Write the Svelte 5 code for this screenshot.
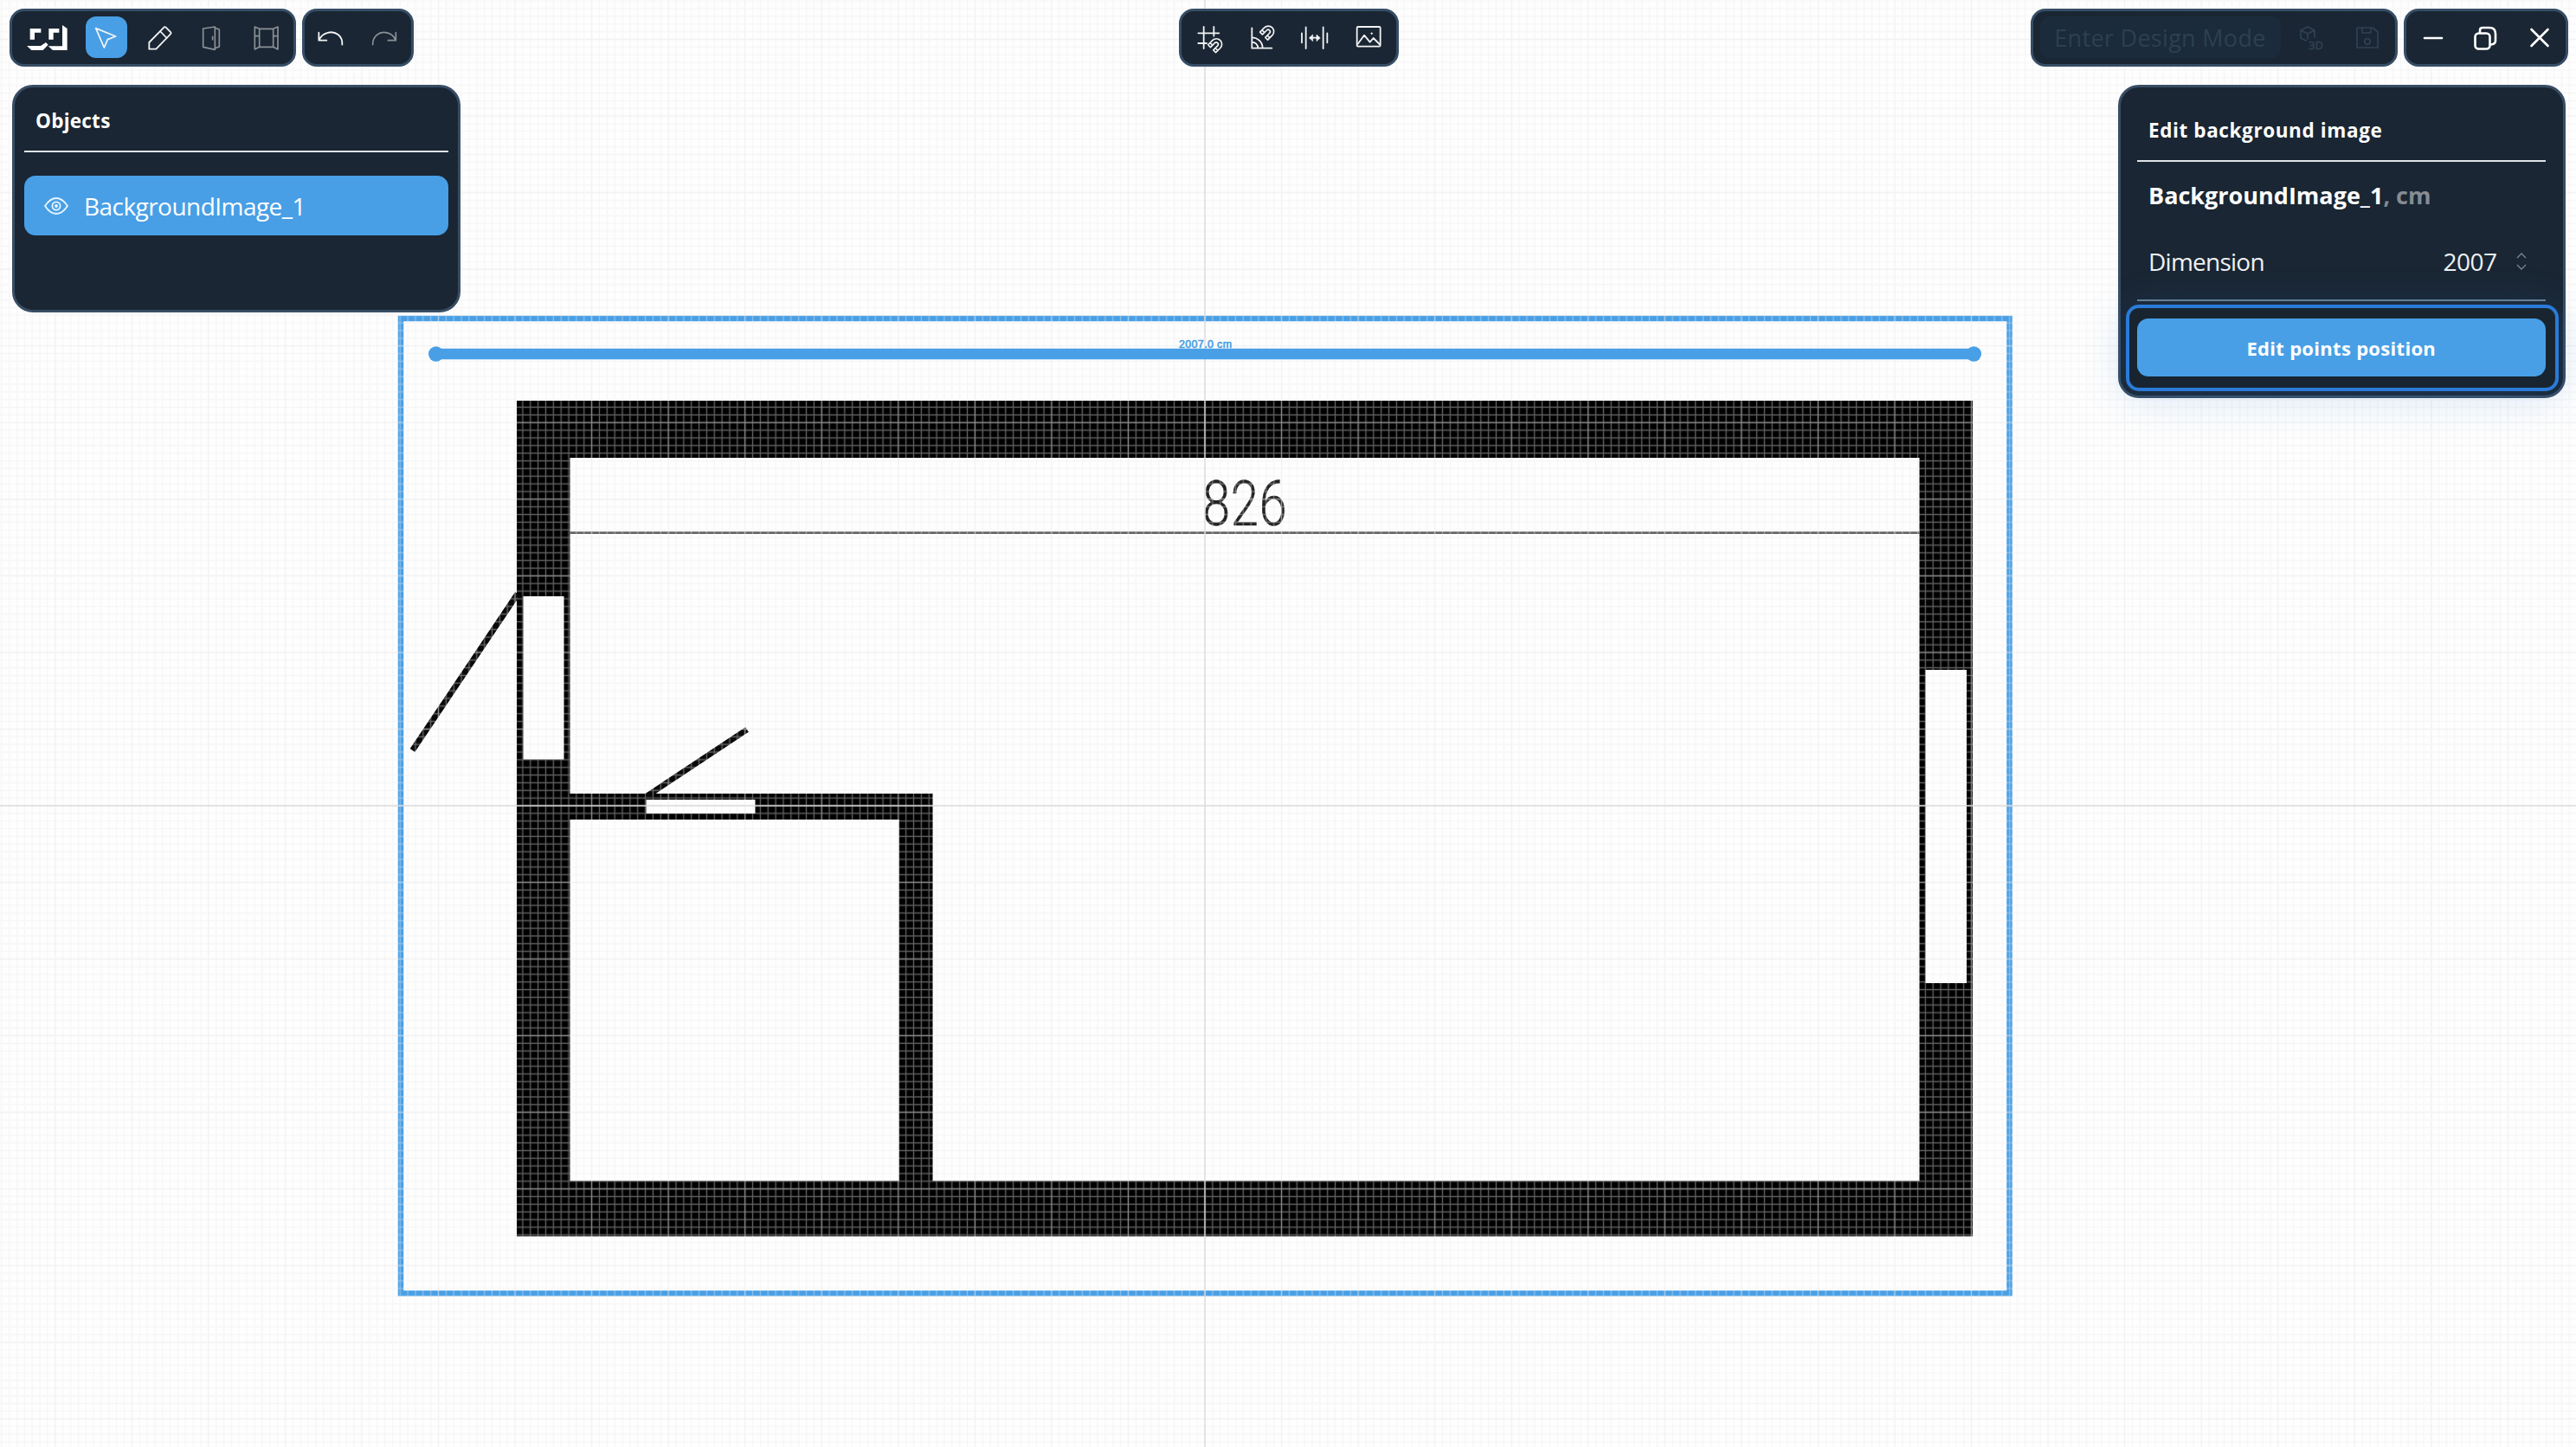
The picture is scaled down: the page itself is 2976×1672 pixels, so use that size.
<script>
  const cx = 1392;
  const cy = 931;
  const cell = 8.855;
  const major = cell * 10;
</script>

{#snippet magnet(x, y)}
  <g transform="translate({x} {y}) rotate(45)">
    <path d="M-19 18V-4A19 19 0 0 1 19 -4V18H7V-3A7 7 0 0 0 -7 -3V18ZM-19 8H-7M7 8H19" stroke-width="5" />
  </g>
{/snippet}

<main class="app">
  <svg class="canvas" viewBox="0 0 2976 1672" width="2976" height="1672">
    <defs>
      <pattern id="minor" x={cx - cell / 2} y={cy - cell / 2} width={cell} height={cell} patternUnits="userSpaceOnUse">
        <path d="M{cell / 2} 0V{cell}M0 {cell / 2}H{cell}" class="minor" />
      </pattern>
      <pattern id="major" x={cx - major / 2} y={cy - major / 2} width={major} height={major} patternUnits="userSpaceOnUse">
        <path d="M{major / 2} 0V{major}M0 {major / 2}H{major}" class="major" />
      </pattern>
    </defs>

    <rect class="selection" x="463" y="368" width="1858.5" height="1126.5" />
    <path
      class="walls"
      fill-rule="evenodd"
      d="M597 463H2279V1428.5H597ZM658.5 529V917H1077.5V1364.5H2217.5V529ZM658.5 947V1364.5H1038.7V947ZM604.5 689H651.5V877.5H604.5ZM746.5 924H872.5V940H746.5ZM2224.5 774H2272V1136H2224.5Z"
    />
    <path class="door" d="M476.5 867L598 686M747 920L863 843" />
    <path class="measure" d="M658 615.7H2218" />
    <text class="figure" x="0" y="0" transform="translate(1389 606.5) scale(.8 1)" textLength="122">826</text>

    <rect width="2976" height="1672" fill="url(#minor)" />
    <rect width="2976" height="1672" fill="url(#major)" />
    <path class="axis" d="M{cx} 0V1672M0 {cy}H2976" />

    <path class="ruler" d="M503.5 409H2280" />
    <circle class="handle" cx="503.7" cy="409" r="8.7" />
    <circle class="handle" cx="2280.3" cy="409" r="8.7" />
    <text class="length" x="1362" y="402" textLength="61">2007.0 cm</text>
  </svg>

  <div class="overlay">
    <header>
      <div class="side">
        <nav class="bar tools">
          <svg class="icon logo" viewBox="92 57 144 144">
            <path d="M103 99H141V113H119V137H103ZM168 99H204V113H184V137H168ZM92 159H140L158 147L166 155L148 174H108ZM215 87L232 99V174H182L166 160H215Z" />
          </svg>
          <button class="tool active" aria-label="Select">
            <svg class="icon" viewBox="298 57 144 144"><path d="M333 98L402 126L374 137L362 165Z" /></svg>
          </button>
          <svg class="icon" viewBox="482 57 144 144"><path d="M516 170V147L568 94Q571 92 574 95L591 112Q593 115 590 118L540 170ZM554 108L577 132" /></svg>
          <svg class="icon dim" viewBox="666 57 144 144"><path d="M704 99L745 93V172L704 163ZM745 97L760 102V162L745 167M737 127V137" /></svg>
          <svg class="icon dim" viewBox="850 57 144 144"><path d="M881 93L897 100V163L881 171ZM961 93L945 100V163L961 171ZM897 100H945V163H897ZM881 125H897M945 125H961" /></svg>
        </nav>
        <nav class="bar history">
          <svg class="icon" viewBox="1072 57 144 144"><path d="M1103 113V140H1130M1104 139C1115 111 1150 105 1170 120C1182 130 1185 142 1184 155" /></svg>
          <svg class="icon dim" viewBox="1258 57 144 144"><path d="M1370 113V140H1343M1369 139C1358 111 1323 105 1304 121C1293 131 1289 142 1290 155" /></svg>
        </nav>
      </div>

      <nav class="bar snaps">
        <svg class="icon" viewBox="75 57 144 144">
          <path d="M122 93V168M157 93V125M103 115H175M103 150H132" />
          {@render magnet(163, 156)}
        </svg>
        <svg class="icon" viewBox="257 57 144 144">
          <path d="M291 97V167H360M291 146A21 21 0 0 1 312 167M291 130A37 37 0 0 1 328 167" />
          {@render magnet(345, 112)}
        </svg>
        <svg class="icon" viewBox="439 57 144 144">
          <path d="M463 115V148M477 94V168M537 94V168M551 115V148M492 131H522" />
          <path class="solid" d="M489 131L501 120V142ZM526 131L514 120V142Z" />
        </svg>
        <svg class="icon" viewBox="621 57 144 144">
          <rect x="653" y="93" width="81" height="68" rx="4" />
          <path d="M656 152L678 122L698 146L710 132L731 153" />
          <circle class="solid" cx="704" cy="116" r="2.5" />
        </svg>
      </nav>

      <div class="side end">
        <nav class="bar mode">
          <button class="design"><span>Enter Design Mode</span></button>
          <svg class="icon faint" viewBox="0 0 48 48">
            <path d="M17 12L25 16V24M17 12L9 16V25L15 28M9 16L17 20L25 16M17 20V26" />
            <text x="18" y="37.5">3D</text>
          </svg>
          <svg class="icon faint" viewBox="0 0 48 48">
            <path d="M12 13H30L36 18V36H12ZM18 13V19H28V13" /><circle cx="24" cy="29" r="3.3" />
          </svg>
        </nav>
        <nav class="bar window">
          <svg class="icon bright" viewBox="0 0 48 48"><path d="M14 25H34" /></svg>
          <svg class="icon bright" viewBox="0 0 48 48">
            <rect x="11.5" y="19.5" width="17" height="18" rx="4" />
            <path d="M17 18V16Q17 13 20 13H28Q35 13 35 20V28Q35 31 32 32L29.5 32.5" />
          </svg>
          <svg class="icon bright" viewBox="0 0 48 48"><path d="M14.5 15L33.5 34M33.5 15L14.5 34" /></svg>
        </nav>
      </div>
    </header>

    <div class="panels">
      <section class="panel objects">
        <h2><span>Objects</span></h2>
        <hr />
        <div class="item">
          <svg viewBox="0 0 28 20"><path d="M1 10Q7 1 14 1T27 10Q21 19 14 19T1 10Z" /><circle cx="14" cy="10" r="4.6" /><circle cx="14" cy="10" r="1" /></svg>
          <span>BackgroundImage_1</span>
        </div>
      </section>

      <section class="panel edit">
        <h2><span>Edit background image</span></h2>
        <hr />
        <h3><span>BackgroundImage_1</span><em>, cm</em></h3>
        <div class="field">
          <span class="label">Dimension</span>
          <span class="value">2007</span>
          <svg viewBox="0 0 12 20"><path d="M1 6L6 1L11 6M1 14L6 19L11 14" /></svg>
        </div>
        <hr class="soft" />
        <div class="focus">
          <button class="primary"><span>Edit points position</span></button>
        </div>
      </section>
    </div>
  </div>
</main>

<style>
  :global(body) { margin: 0; background: #fefefe; }
  .app {
    position: relative; width: 2976px; height: 1672px; overflow: hidden;
    font-family: "Open Sans", "Noto Sans", sans-serif; color: #fff;
  }
  .canvas { display: block; }
  .overlay { position: absolute; inset: 0; }

  .minor { stroke: rgba(236, 236, 236, .4); stroke-width: 1.4; }
  .major { stroke: rgba(232, 232, 232, .3); stroke-width: 1.4; }
  .axis { stroke: rgba(216, 216, 216, .85); stroke-width: 1.4; }
  .selection { fill: none; stroke: #489fe6; stroke-width: 6.5; }
  .walls { fill: #000; }
  .door { fill: none; stroke: #0a0a0a; stroke-width: 6.8; }
  .measure { stroke: #666; stroke-width: 2.8; }
  .figure { font: 300 72.5px Roboto, sans-serif; fill: #222; stroke: #222; stroke-width: .4; }
  .ruler { stroke: #489fe6; stroke-width: 12.5; }
  .handle { fill: #489fe6; }
  .length { font: 12.4px "Liberation Sans", sans-serif; fill: #489fe6; stroke: #489fe6; stroke-width: .6; }

  header { display: grid; grid-template-columns: 1fr auto 1fr; padding: 9.5px 9px 0 10.5px; }
  .side { display: flex; gap: 7px; }
  .end { justify-content: flex-end; }
  .bar {
    box-sizing: border-box; height: 67px; display: flex; align-items: center;
    border: 3px solid #364d66; border-radius: 17px; background: #1a2633;
  }
  .tools { width: 331px; padding-left: 17px; gap: 13.5px; }
  .history { width: 129.5px; padding-left: 6px; gap: 14px; }
  .snaps { width: 254px; padding-left: 10px; gap: 12.7px; }
  .mode { width: 423.5px; padding-left: 7.5px; gap: 14px; }
  .window { width: 190.5px; padding-left: 7px; gap: 13.5px; }

  button { font: inherit; color: inherit; border: 0; padding: 0; margin: 0; }
  span { white-space: nowrap; }
  .icon {
    width: 48px; height: 48px; flex: none; display: block; fill: none; stroke: #f2f3f4;
    stroke-width: 5.4; stroke-linejoin: round; stroke-linecap: round;
  }
  .logo { margin-right: 7px; fill: #fff; stroke: none; }
  .dim { stroke: #8b9196; stroke-width: 5; }
  .solid { fill: #f2f3f4; stroke-width: 2; }
  .bright { stroke-width: 2.6; stroke: #fff; }
  .faint { stroke: #2f4252; stroke-width: 1.7; }
  .faint text { font: 13px "Open Sans", sans-serif; fill: #2f4252; stroke: #2f4252; stroke-width: .5; }
  .tool { width: 48px; height: 48px; border-radius: 12px; flex: none; }
  .active { background: #489fe6; }
  .design {
    width: 278px; height: 48px; border-radius: 10px; background: #1b2b3b; color: #2c4052;
    font-size: 27px; line-height: 47px; letter-spacing: .3px; flex: none;
  }

  .panels { display: flex; justify-content: space-between; align-items: flex-start; padding: 21.5px 12px 0 14px; }
  .panel {
    box-sizing: border-box; width: 517.5px; border: 3px solid #384d64; border-radius: 24px; background: #1a2633;
  }
  .objects { height: 262.5px; padding: 0 11px; }
  .edit { height: 361.5px; padding: 0 20.5px 0 19.5px; }
  h2 { margin: 0; font-size: 22.5px; font-weight: 700; line-height: 30px; }
  h2 span { margin-left: 13px; }
  .objects h2 { padding: 24px 0 19px; letter-spacing: .25px; }
  .edit h2 { padding: 35px 0 19px; letter-spacing: .6px; }
  hr { margin: 0; border: 0; height: 2px; background: #dfe3e7; }
  .item {
    box-sizing: border-box; margin-top: 27px; height: 68.5px; border-radius: 13px; background: #489fe6;
    display: flex; align-items: center; font-size: 28px; padding: 1px 0 0 23px; gap: 18px; letter-spacing: -.55px;
  }
  .item svg { width: 28px; height: 20px; fill: none; stroke: #e8f4ff; stroke-width: 1.8; overflow: visible; }
  h3 { margin: 0; font-size: 27px; line-height: 36px; padding: 21px 0 0 13px; }
  h3 em { font-style: normal; color: #858c93; }
  .field { display: flex; align-items: center; height: 40px; margin-top: 38px; padding: 0 21.5px 0 13px; font-size: 28px; color: #eef1f4; }
  .label { flex: 1; letter-spacing: -.75px; }
  .value { letter-spacing: -.5px; }
  .field svg { width: 12px; height: 20px; margin-left: 22.5px; fill: none; stroke: #7a838c; stroke-width: 1.4; }
  .soft { margin-top: 24px; background: #6a8092; }
  .focus {
    box-sizing: border-box; width: 500.5px; height: 100px; margin: 4px 0 0 -13.5px; padding: 12px 10px 12px 9.5px;
    border: 4px solid #2a7bd9; border-radius: 15px; background: #182530;
    box-shadow: 0 6px 50px rgba(42, 123, 217, .2);
  }
  .primary {
    display: block; width: 471.5px; height: 67px; background: #489fe6; border-radius: 13px;
    font-weight: 700; font-size: 22px; line-height: 68px; letter-spacing: .3px;
  }
</style>
